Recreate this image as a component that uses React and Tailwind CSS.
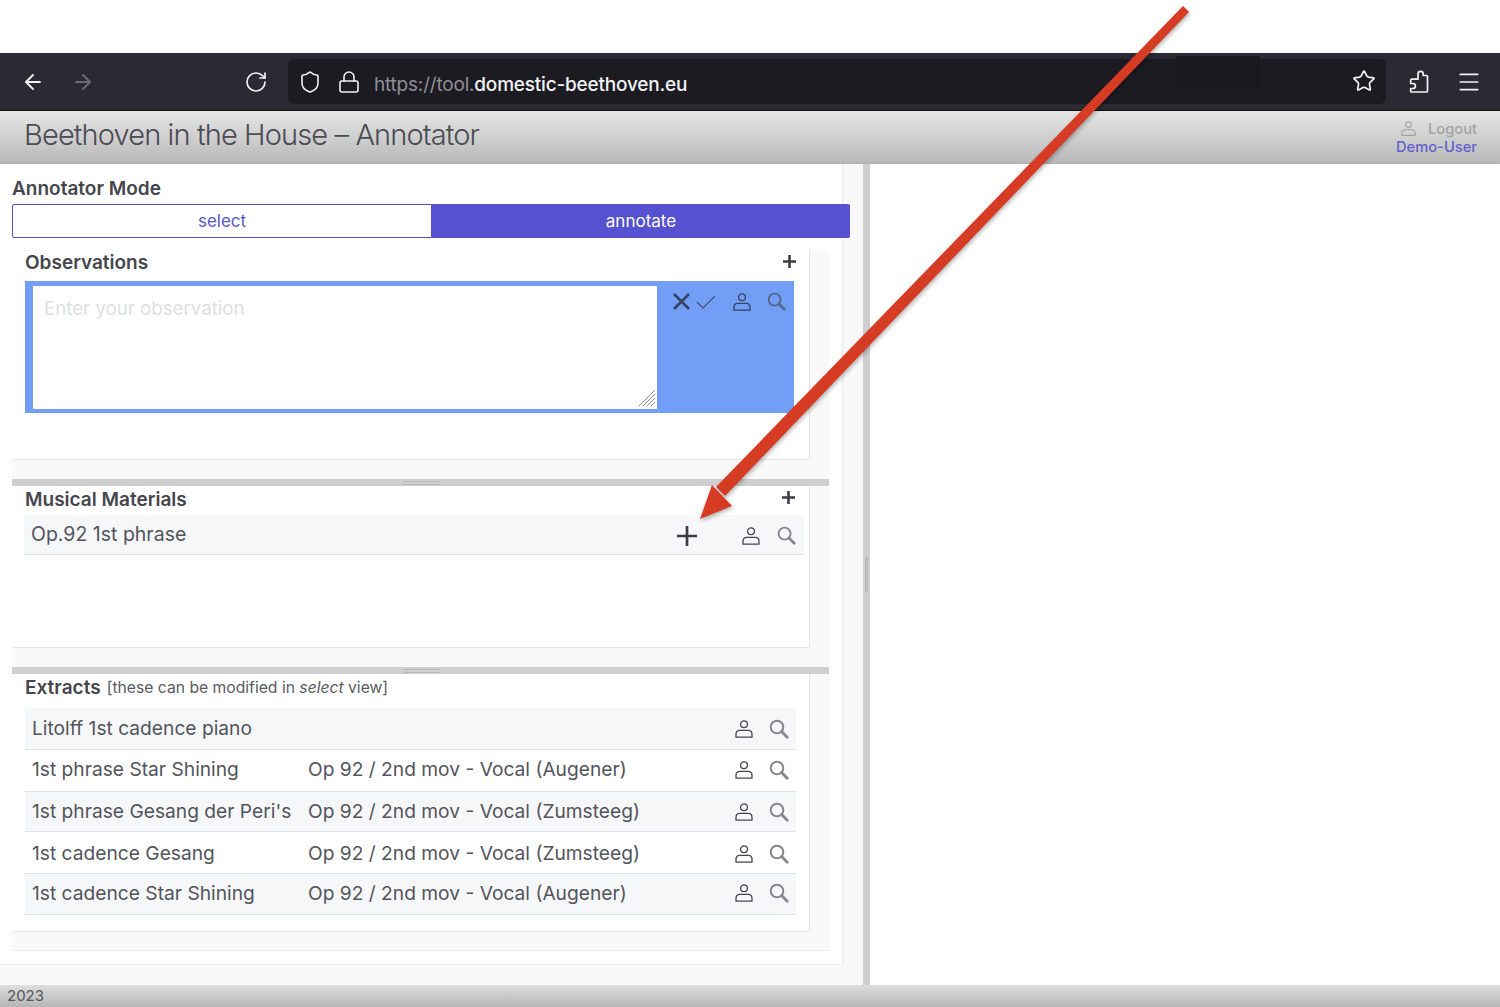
import React from "react";
import { ArrowLeft, ArrowRight, RotateCw, Shield, Lock, Star, Menu } from "lucide-react";

const extracts = [
  { name: "Litolff 1st cadence piano", source: "", h: "h-[42px]", shaded: true },
  { name: "1st phrase Star Shining", source: "Op 92 / 2nd mov - Vocal (Augener)", h: "h-[42px] pb-[2px]", shaded: false },
  { name: "1st phrase Gesang der Peri's", source: "Op 92 / 2nd mov - Vocal (Zumsteeg)", h: "h-[40px]", shaded: true },
  { name: "1st cadence Gesang", source: "Op 92 / 2nd mov - Vocal (Zumsteeg)", h: "h-[42px] pt-[2px]", shaded: false },
  { name: "1st cadence Star Shining", source: "Op 92 / 2nd mov - Vocal (Augener)", h: "h-[41px] pb-[2px]", shaded: true },
];

function UserIcon({ className = "" }) {
  return (
    <svg viewBox="0 0 18 18" fill="none" stroke="currentColor" strokeWidth="1.3" className={className}>
      <circle cx="9" cy="4.3" r="3.4" />
      <path d="M1 17.2v-2.8c0-2.5 1.8-4 3.8-4h8.4c2 0 3.8 1.5 3.8 4v2.8z" />
    </svg>
  );
}

function SearchIcon({ className = "" }) {
  return (
    <svg viewBox="0 0 20 20" fill="none" stroke="currentColor" className={className}>
      <circle cx="8" cy="8" r="6.3" strokeWidth="2" />
      <path d="M12.6 12.6l5.6 5.6" strokeWidth="2.8" strokeLinecap="round" />
    </svg>
  );
}

function PlusIcon({ className = "", width = 3 }) {
  return (
    <svg viewBox="0 0 20 20" fill="none" stroke="currentColor" strokeWidth={width} className={className}>
      <path d="M10 0v20M0 10h20" />
    </svg>
  );
}

function PuzzleIcon({ className = "" }) {
  return (
    <svg viewBox="0 0 20 24" fill="none" stroke="currentColor" strokeWidth="1.7" strokeLinejoin="round" className={className}>
      <path d="M9 5.5V4a2.6 2.6 0 0 1 5.2 0v1.5h3.3a1 1 0 0 1 1 1V21a1 1 0 0 1-1 1H2.5a.8.8 0 0 1-.8-.8v-2.7h2.2a2.5 2.5 0 0 0 0-5H1.7v-3.3a1 1 0 0 1 1-1H9z" />
    </svg>
  );
}

function ResizeHandle() {
  return (
    <svg viewBox="0 0 18 18" stroke="#8a8a8a" strokeWidth="1" className="absolute bottom-[2px] right-[1px] h-[18px] w-[18px]">
      <path d="M1 17L17 1M5 17L17 5M9 17l8-8M13 17l4-4" />
    </svg>
  );
}

function DragHandle() {
  return (
    <div className="absolute left-[391px] top-[2px] h-[4px] w-[37px] border-y border-[#b9b9b9]" />
  );
}

function SectionHeading({ children }) {
  return <h2 className="text-[19px] font-semibold leading-none text-[#45464d]">{children}</h2>;
}

function Divider() {
  return (
    <div className="relative h-[7px] bg-[#cfcfcf]">
      <DragHandle />
    </div>
  );
}

export default function App() {
  return (
    <div className="relative h-[1007px] w-[1500px] overflow-hidden bg-white font-['Inter',sans-serif]">
      <div className="h-[53px] bg-white" />

      {/* browser chrome */}
      <div className="flex h-[58px] items-center border-b border-[#0f0f12] bg-[#2b2a33] text-[#f2f2f4]">
        <ArrowLeft className="ml-[21px] h-[24px] w-[24px]" strokeWidth={1.8} />
        <ArrowRight className="ml-[26px] h-[24px] w-[24px] text-[#6d6c75]" strokeWidth={1.8} />
        <RotateCw className="ml-[149px] h-[24px] w-[24px]" strokeWidth={1.7} />
        <div className="relative ml-[20px] flex h-[45px] w-[1098px] items-center rounded-[6px] bg-[#1c1b22]">
          <Shield className="ml-[10px] h-[24px] w-[24px]" strokeWidth={1.6} />
          <Lock className="ml-[15px] h-[24px] w-[24px]" strokeWidth={1.6} />
          <span className="ml-[13px] pt-[8px] text-[19px] tracking-[-0.2px] text-[#8f8f96]">
            https://tool.<span className="font-medium text-[#f2f2f4]">domestic-beethoven.eu</span>
          </span>
          <div className="absolute left-[888px] top-[-3px] h-[38px] w-[84px] bg-[#1a191f]" />
          <Star className="absolute left-[1064px] top-[10px] h-[24px] w-[24px]" strokeWidth={1.7} />
        </div>
        <PuzzleIcon className="ml-[23px] h-[24px] w-[20px]" />
        <Menu className="ml-[27px] h-[26px] w-[26px]" strokeWidth={1.6} />
      </div>

      {/* app header */}
      <div className="flex h-[53px] items-center justify-between border-b border-[#b0b0b0] bg-gradient-to-b from-[#e6e6e6] to-[#b9b9b9] pl-[24px] pr-[23px]">
        <h1 className="pb-[4px] text-[29px] font-light tracking-[-0.88px] text-[#4a4b53]">Beethoven in the House – Annotator</h1>
        <div className="flex flex-col items-end pt-[1px] text-[14.7px] font-medium leading-[18px]">
          <div className="flex items-center text-[#a3a3a3]">
            <UserIcon className="mr-[12px] h-[15px] w-[15px]" />
            <span>Logout</span>
          </div>
          <span className="text-[#625fcf]">Demo-User</span>
        </div>
      </div>

      <div className="flex h-[821px]">
        {/* left panel */}
        <div className="h-full w-[863px] bg-[#f9f9f9]">
          <div className="h-[801px] w-[843px] border-b border-r border-[#ececec] bg-white pl-[12px]">
            <div className="w-[838px] pt-[15px]">
              <h2 className="text-[19px] font-semibold leading-[20px] text-[#45464d]">Annotator Mode</h2>
              <div className="mt-[5px] flex h-[34px] text-[17px]">
                <button className="w-[420px] rounded-l-[2px] border border-[#5450c8] bg-white pt-[2px] text-[#5a56c6]">select</button>
                <button className="w-[418px] rounded-r-[2px] bg-[#5551d0] pt-[2px] text-white">annotate</button>
              </div>
            </div>

            <div className="mt-[12px] h-[701px] w-[817px] border-b border-[#ececec] bg-[#f9f9f9]">
              {/* observations */}
              <section className="h-[210px] w-[798px] border-b border-r border-[#e6e6e6] bg-white pl-[13px]">
                <div className="flex h-[31px] items-center justify-between pb-[7px] pr-[13px]">
                  <SectionHeading>Observations</SectionHeading>
                  <PlusIcon className="mb-[2px] h-[13px] w-[13px] text-[#3c3d45]" width={4} />
                </div>
                <div className="flex h-[132px] w-[769px] items-start bg-[#739ef5] pb-[4px] pl-[8px] pt-[5px]">
                  <div className="relative h-[123px] w-[624px]">
                    <textarea
                      placeholder="Enter your observation"
                      className="h-full w-full resize-none bg-white px-[11px] pb-[9px] pt-[10px] text-[18.7px] leading-[26px] outline-none placeholder:text-[#dedfe3]"
                    />
                    <ResizeHandle />
                  </div>
                  <div className="flex items-center pl-[15px] pt-[6px] text-[#33425f]">
                    <svg viewBox="0 0 19 19" fill="none" stroke="currentColor" strokeWidth="2.6" className="h-[19px] w-[19px]">
                      <path d="M2 2l15 15M17 2L2 17" />
                    </svg>
                    <svg viewBox="0 0 20 14" fill="none" stroke="currentColor" strokeWidth="1.4" className="ml-[5px] h-[14px] w-[20px] text-[#46597d]">
                      <path d="M1 7l6 6L19 1" />
                    </svg>
                    <UserIcon className="ml-[17px] h-[18px] w-[18px]" />
                    <SearchIcon className="ml-[16px] h-[19px] w-[19px] text-[#54678c]" />
                  </div>
                </div>
              </section>
              <div className="h-[19px]" />
              <Divider />

              {/* musical materials */}
              <section className="h-[162px] w-[798px] border-b border-r border-[#e6e6e6] bg-white pl-[12px]">
                <div className="flex h-[29px] items-center justify-between pb-[3px] pl-[1px] pr-[14px]">
                  <SectionHeading>Musical Materials</SectionHeading>
                  <PlusIcon className="mb-[4px] h-[13px] w-[13px] text-[#3c3d45]" width={4} />
                </div>
                <div className="flex h-[40px] w-[780px] items-center border-b border-[#e1e3e8] bg-[#f6f7f9] pl-[7px] text-[19.5px] text-[#53545c]">
                  <span className="w-[646px]">Op.92 1st phrase</span>
                  <PlusIcon className="mt-[2px] h-[20px] w-[20px] text-[#3c3d45]" width={2.7} />
                  <UserIcon className="ml-[45px] mt-[2px] h-[18px] w-[18px] text-[#45464d]" />
                  <SearchIcon className="ml-[17px] mt-[2px] h-[19px] w-[19px] text-[#85868c]" />
                </div>
              </section>
              <div className="h-[19px]" />
              <Divider />

              {/* extracts */}
              <section className="h-[258px] w-[798px] border-b border-r border-[#e6e6e6] bg-white pl-[13px]">
                <div className="flex h-[34px] items-center gap-[6px] pb-[7px]">
                  <SectionHeading>Extracts</SectionHeading>
                  <span className="text-[15.7px] text-[#5a5b63]">
                    [these can be modified in <em>select</em> view]
                  </span>
                </div>
                {extracts.map((row) => (
                  <div
                    key={row.name}
                    className={`flex w-[771px] items-center border-b border-[#dfe1e6] pl-[7px] pr-[7px] text-[19.2px] text-[#53545c] ${row.h} ${
                      row.shaded ? "bg-[#f6f7f9]" : "bg-white"
                    }`}
                  >
                    <span className="w-[276px] whitespace-nowrap">{row.name}</span>
                    <span className="whitespace-nowrap">{row.source}</span>
                    <UserIcon className="ml-auto h-[18px] w-[18px] text-[#45464d]" />
                    <SearchIcon className="ml-[16px] h-[20px] w-[20px] text-[#85868c]" />
                  </div>
                ))}
              </section>
            </div>
          </div>
        </div>

        {/* vertical split */}
        <div className="relative h-full w-[7px] bg-[#cfcfcf]">
          <div className="absolute left-[2px] top-[393px] h-[35px] w-[3px] bg-[#bcbcbc]" />
        </div>
        <div className="flex-1 bg-white" />
      </div>

      {/* footer */}
      <div className="flex h-[22px] items-center bg-gradient-to-b from-[#dedede] to-[#b6b6b6] pl-[7px] pt-[1px] text-[15px] text-[#55565c]">
        2023
      </div>

      {/* red arrow over the screenshot */}
      <svg viewBox="0 0 1500 1007" className="pointer-events-none absolute left-0 top-0 h-[1007px] w-[1500px]">
        <g fill="#d63b23" style={{ filter: "drop-shadow(1px 2px 2px rgba(0,0,0,0.3))" }}>
          <polygon points="1183,6 1189,12 725,496 716,487" />
          <polygon points="700,519 712,485 732,506" />
        </g>
      </svg>
    </div>
  );
}
